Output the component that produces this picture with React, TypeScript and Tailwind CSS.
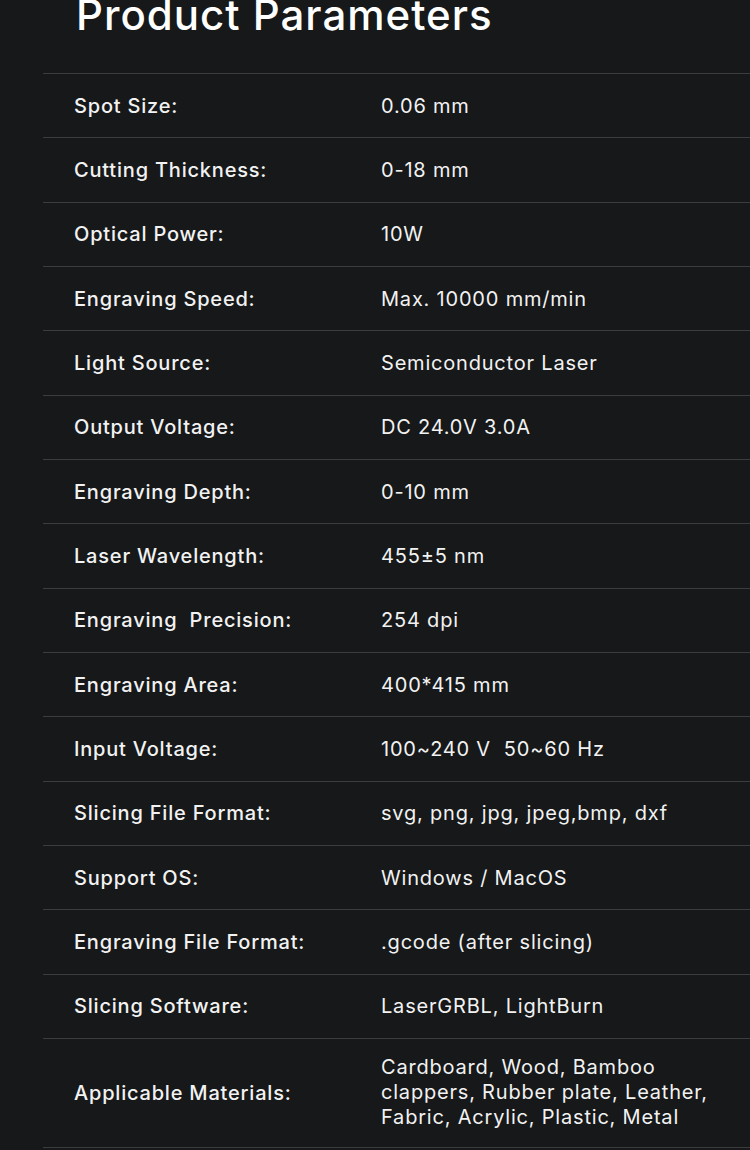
import React from 'react';

const params: { label: string; value: string }[] = [
  { label: 'Spot Size:', value: '0.06 mm' },
  { label: 'Cutting Thickness:', value: '0-18 mm' },
  { label: 'Optical Power:', value: '10W' },
  { label: 'Engraving Speed:', value: 'Max. 10000 mm/min' },
  { label: 'Light Source:', value: 'Semiconductor Laser' },
  { label: 'Output Voltage:', value: 'DC 24.0V 3.0A' },
  { label: 'Engraving Depth:', value: '0-10 mm' },
  { label: 'Laser Wavelength:', value: '455±5 nm' },
  { label: 'Engraving  Precision:', value: '254 dpi' },
  { label: 'Engraving Area:', value: '400*415 mm' },
  { label: 'Input Voltage:', value: '100~240 V  50~60 Hz' },
  { label: 'Slicing File Format:', value: 'svg, png, jpg, jpeg,bmp, dxf' },
  { label: 'Support OS:', value: 'Windows / MacOS' },
  { label: 'Engraving File Format:', value: '.gcode (after slicing)' },
  { label: 'Slicing Software:', value: 'LaserGRBL, LightBurn' },
];

const App = () => {
  return (
    <div
      className="w-[750px] h-[1150px] overflow-hidden bg-[#161819] text-[#f2f2f2]"
      style={{ fontFamily: 'Inter, sans-serif' }}
    >
      <h1 className="pl-[76px] -mt-[10px] h-[83px] text-[42px] leading-[50px] font-medium text-white tracking-[1px]">
        Product Parameters
      </h1>

      <div className="ml-[43px] border-b border-[#3a3c3e]">
        {params.map((p) => (
          <div
            key={p.label}
            className="flex items-center h-[64.33px] border-t border-[#3a3c3e] text-[20px] tracking-[0.8px] whitespace-pre"
          >
            <span className="w-[338px] pl-[31px] font-medium">{p.label}</span>
            <span>{p.value}</span>
          </div>
        ))}
        <div className="flex items-center h-[109px] border-t border-[#3a3c3e] text-[20px] tracking-[0.8px]">
          <span className="w-[338px] shrink-0 pl-[31px] font-medium">Applicable Materials:</span>
          <span className="leading-[25px] whitespace-nowrap">
            Cardboard, Wood, Bamboo
            <br />
            clappers, Rubber plate, Leather,
            <br />
            Fabric, Acrylic, Plastic, Metal
          </span>
        </div>
      </div>
    </div>
  );
};

export default App;
